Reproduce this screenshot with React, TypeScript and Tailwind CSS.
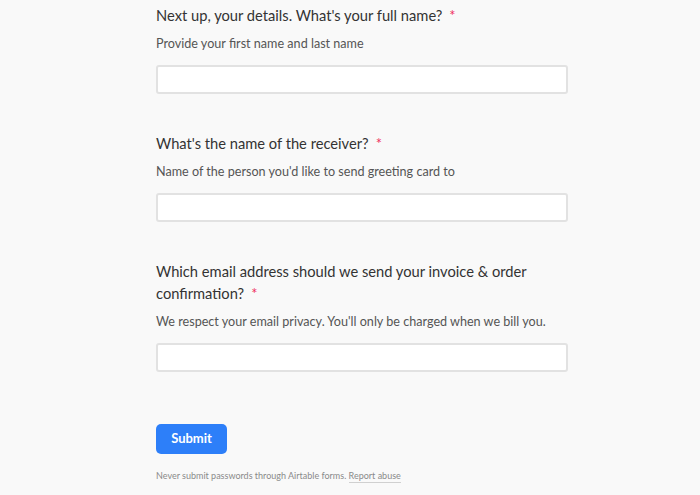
import React from "react";

function Field({ title, desc }: { title: React.ReactNode; desc: string }) {
  return (
    <div className="flex flex-col">
      <div className="text-[14.7px] leading-[22px] text-[#333333] pr-[130px]">
        {title}
        <span className="text-[#ef3061] ml-[7px]">*</span>
      </div>
      <div className="mt-[8px] text-[12.6px] leading-[20px] text-[#555555]">{desc}</div>
      <div className="mt-[11px] h-[29px] w-[412px] bg-white border-2 border-[#e2e2e2] rounded-[3px]" />
    </div>
  );
}

export default function App() {
  return (
    <div
      className="w-[700px] h-[495px] bg-[#f9f9f9] overflow-hidden"
      style={{ fontFamily: 'Lato, "Open Sans", sans-serif' }}
    >
      <div className="ml-[156px] pt-[4px] flex flex-col gap-[38px]">
        <Field title="Next up, your details. What's your full name?" desc="Provide your first name and last name" />
        <Field title="What's the name of the receiver?" desc="Name of the person you'd like to send greeting card to" />
        <Field
          title="Which email address should we send your invoice & order confirmation?"
          desc="We respect your email privacy. You'll only be charged when we bill you."
        />
      </div>
      <div className="ml-[156px] mt-[52px]">
        <button className="w-[71px] h-[30px] bg-[#2d7ff9] rounded-[5px] text-white text-[13px] font-bold">
          Submit
        </button>
        <div className="mt-[15px] text-[9px] text-[#8a8a8a]">
          Never submit passwords through Airtable forms.{" "}
          <span className="border-b border-[#d0d0d0] pb-[1px]">Report abuse</span>
        </div>
      </div>
    </div>
  );
}
